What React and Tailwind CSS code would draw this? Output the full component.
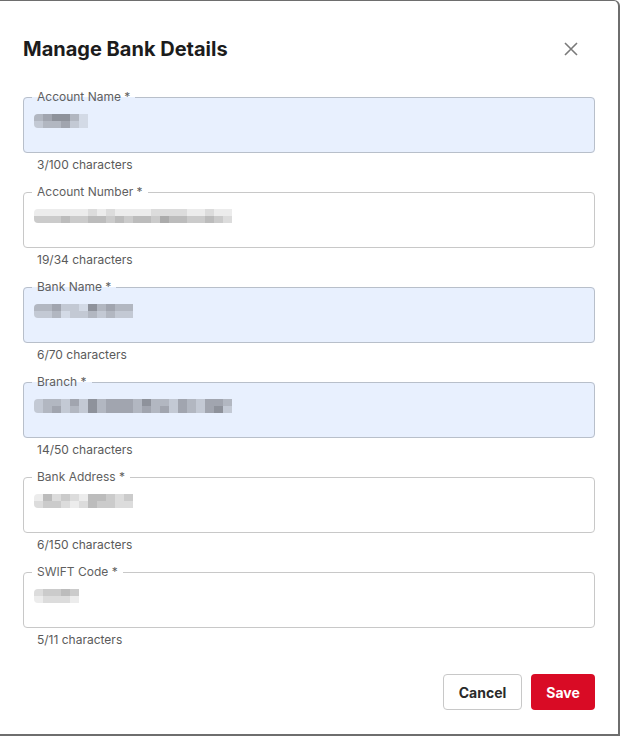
import React from "react";

const BLUE = ["#e8f0fe", "#d3dae6", "#c3c9d4", "#b2b7c1", "#a1a5af", "#8e929b"];
const WHITE = ["#ffffff", "#ececec", "#dcdcdc", "#cbcbcb", "#bcbcbc", "#ababab"];

const fields = [
  { label: "Account Name *", helper: "3/100 characters", filled: true, rows: ["345531", "233421"] },
  { label: "Account Number *", helper: "19/34 characters", filled: false, rows: ["1111112121111222211211", "3334334434344354433432"] },
  { label: "Bank Name *", helper: "6/70 characters", filled: true, rows: ["33422153433", "22312232322"] },
  { label: "Branch *", helper: "14/50 characters", filled: true, rows: ["2332425344435332432443", "2342325344434342432452"] },
  { label: "Bank Address *", helper: "6/150 characters", filled: false, rows: ["14232144323", "23321243322"] },
  { label: "SWIFT Code *", helper: "5/11 characters", filled: false, rows: ["233430", "122210"] },
];

function Blur({ rows, filled }) {
  const pal = filled ? BLUE : WHITE;
  return (
    <div className="flex flex-col rounded-l-[4px] overflow-hidden">
      {rows.map((r, i) => (
        <div key={i} className="flex">
          {r.split("").map((c, j) => (
            <div key={j} className="w-[9px] h-[7px]" style={{ backgroundColor: pal[Number(c)] }} />
          ))}
        </div>
      ))}
    </div>
  );
}

function Field({ f }) {
  return (
    <div className="flex flex-col">
      <fieldset
        className={`h-[62px] -mt-[6px] rounded-[4px] border px-[8px] pb-0 m-0 ${
          f.filled ? "bg-[#e8f0fe] border-[#b8bfca]" : "bg-white border-[#c8c8c8]"
        }`}
      >
        <legend className="px-[5px] ml-[0px] text-[12px] leading-[12px] text-[#5f5f5f]">{f.label}</legend>
        <div className="pt-[11px] pl-[2px]">
          <Blur rows={f.rows} filled={f.filled} />
        </div>
      </fieldset>
      <div className="mt-[4px] pl-[14px] text-[12px] leading-[16px] text-[#5a5a5a]">{f.helper}</div>
    </div>
  );
}

export default function App() {
  return (
    <div
      className="w-[620px] h-[736px] bg-white border-t border-r-2 border-b-2 border-[#6e6e6e] rounded-tr-[6px] box-border flex flex-col px-[23px]"
      style={{ fontFamily: "Inter, 'Noto Sans', sans-serif" }}
    >
      <div className="flex items-center justify-between h-[28px] mt-[34px]">
        <h2 className="text-[20px] font-bold text-[#1c1c1c] tracking-[0px]">Manage Bank Details</h2>
        <button className="w-[28px] h-[28px] flex items-center justify-center mr-[10px] text-[#7a7a7a]">
          <svg width="16" height="16" viewBox="0 0 16 16" fill="none" stroke="currentColor" strokeWidth="1.6">
            <path d="M2 2 L14 14 M14 2 L2 14" />
          </svg>
        </button>
      </div>
      <div className="flex flex-col gap-[19px] mt-[34px]">
        {fields.map((f) => (
          <Field key={f.label} f={f} />
        ))}
      </div>
      <div className="flex justify-end gap-[9px] mt-[26px]">
        <button className="h-[36px] w-[79px] rounded-[4px] border border-[#c8c8c8] bg-white text-[14px] font-bold text-[#2a2a2a]">
          Cancel
        </button>
        <button className="h-[36px] w-[64px] rounded-[4px] bg-[#d90b25] text-[14px] font-bold text-white">
          Save
        </button>
      </div>
    </div>
  );
}
